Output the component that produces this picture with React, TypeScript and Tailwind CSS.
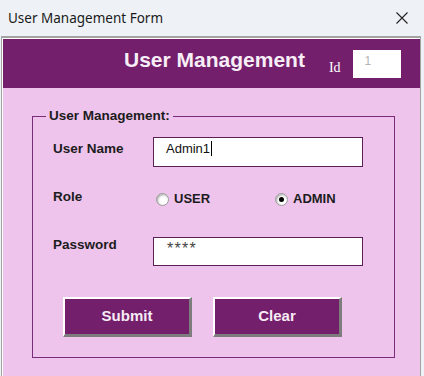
const purple = "bg-[#741f6c]";

const Radio = ({ label, checked }: { label: string; checked?: boolean }) => (
  <div className="mt-[2px] flex h-[16px] w-[119px] items-center">
    <span className="flex h-[13px] w-[13px] items-center justify-center rounded-full border border-[#9a9a9a] bg-white shadow-[inset_1px_1px_2px_rgba(0,0,0,0.35)]">
      {checked && <span className="h-[5px] w-[5px] rounded-full bg-black" />}
    </span>
    <span className="ml-[5px] text-[13px] leading-[16px] font-bold text-[#1c1c1c]">{label}</span>
  </div>
);

const BevelButton = ({ children }: { children: string }) => (
  <button
    className={`h-[40px] w-[129px] border-t-2 border-l-2 border-b-[3px] border-r-[3px] border-t-white border-l-white border-b-[#7d7d7d] border-r-[#7d7d7d] ${purple} text-[15px] font-bold text-[#f6ecf5]`}
  >
    {children}
  </button>
);

const App = () => {
  return (
    <div
      className="flex h-[376px] w-[424px] flex-col overflow-hidden bg-[#eef2f7]"
      style={{ fontFamily: '"Liberation Sans", Arial, sans-serif' }}
    >
      {/* window title bar */}
      <div className="flex h-[36px] shrink-0 items-center justify-between pr-[16px] pl-[8px]">
        <span className="text-[13.5px] text-[#1a1a1a]" style={{ fontFamily: '"Noto Sans", sans-serif' }}>
          User Management Form
        </span>
        <svg width="12" height="12" viewBox="0 0 12 12" className="text-[#222]">
          <path d="M0.5 0.5 L11.5 11.5 M11.5 0.5 L0.5 11.5" stroke="currentColor" strokeWidth="1.1" />
        </svg>
      </div>

      <div className="ml-[1px] flex w-[420px] flex-1 flex-col border-x border-t-2 border-[#a3a3a3]">
        <div className="flex flex-1 flex-col border-t border-l border-white bg-[#efc4ec]">
          {/* header band */}
          <div className={`flex h-[49px] shrink-0 items-start ${purple} pl-[121px]`}>
            <h1 className="mt-[9px] text-[21px] leading-[24px] font-bold text-[#f7eef7]">User Management</h1>
            <span
              className="mt-[21px] ml-[24px] text-[14px] leading-[16px] text-white"
              style={{ fontFamily: '"Liberation Serif", serif' }}
            >
              Id
            </span>
            <div className="mt-[11px] ml-[12px] h-[28px] w-[48px] bg-white pt-[4px] pl-[12px] text-[12px] leading-[14px] text-[#b4b4b4]">
              1
            </div>
          </div>

          <fieldset className="mt-[20px] ml-[29px] w-[360px] border border-[#7a2c78] pt-[13px] pb-[20px]">
            <legend className="ml-[13px] px-[3px] text-[13.5px] leading-[16px] font-bold text-[#1c1c1c]">
              User Management:
            </legend>

            <div className="flex items-start pl-[20px]">
              <span className="mt-[4px] w-[100px] text-[13.5px] leading-[16px] font-bold text-[#1c1c1c]">User Name</span>
              <div className="flex h-[30px] w-[210px] items-start border border-[#5a1f57] bg-white pt-[3px] pl-[12px] text-[13px] leading-[16px] text-[#111]">
                Admin1
                <span className="ml-[1px] h-[15px] w-px bg-black" />
              </div>
            </div>

            <div className="mt-[22px] flex items-start pl-[20px]">
              <span className="w-[103px] text-[13.5px] leading-[16px] font-bold text-[#1c1c1c]">Role</span>
              <Radio label="USER" />
              <Radio label="ADMIN" checked />
            </div>

            <div className="mt-[30px] flex items-start pl-[20px]">
              <span className="w-[100px] text-[13.5px] leading-[16px] font-bold text-[#1c1c1c]">Password</span>
              <div className="h-[29px] w-[210px] border border-[#5a1f57] bg-white pt-[3px] pl-[13px] text-[16px] leading-[16px] tracking-[1.3px] text-[#444]">
                ****
              </div>
            </div>

            <div className="mt-[31px] flex gap-[21px] pl-[30px]">
              <BevelButton>Submit</BevelButton>
              <BevelButton>Clear</BevelButton>
            </div>
          </fieldset>
        </div>
      </div>
    </div>
  );
};

export default App;
